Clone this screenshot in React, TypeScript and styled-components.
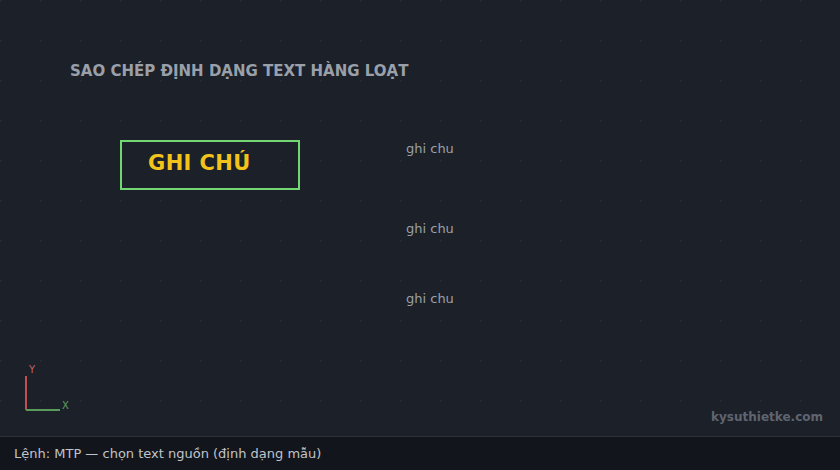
import React from 'react';
import styled, { createGlobalStyle } from 'styled-components';

const GlobalStyle = createGlobalStyle`
  html, body {
    margin: 0;
    padding: 0;
    background: #1c2029;
  }
  body {
    font-family: "DejaVu Sans", "Liberation Sans", sans-serif;
  }
`;

// y positions of the target text entities on the drawing
const notes = [149, 229, 299];

const App: React.FC = () => {
  return (
    <>
      <GlobalStyle />
      <Screen>
        <Canvas>
          <Title>SAO CHÉP ĐỊNH DẠNG TEXT HÀNG LOẠT</Title>
          <SourceBox>GHI CHÚ</SourceBox>
          {notes.map((y) => (
            <Note key={y} $top={y}>ghi chu</Note>
          ))}
          <CanvasFooter>
            <Axis>
              <svg width="40" height="46" viewBox="0 0 40 46">
                <line x1="6" y1="10" x2="6" y2="44" stroke="#c0504d" strokeWidth="2" />
                <line x1="6" y1="44" x2="40" y2="44" stroke="#5a9a5a" strokeWidth="2" />
              </svg>
              <AxisLabel $x={9} $y={-2} $color="#c06262">Y</AxisLabel>
              <AxisLabel $x={42} $y={34} $color="#5fa05f">X</AxisLabel>
            </Axis>
            <Watermark>kysuthietke.com</Watermark>
          </CanvasFooter>
        </Canvas>
        <CommandBar>Lệnh: MTP — chọn text nguồn (định dạng mẫu)</CommandBar>
      </Screen>
    </>
  );
};

export default App;

const Screen = styled.div`
  width: 840px;
  height: 470px;
  display: flex;
  flex-direction: column;
  overflow: hidden;
`;

const Canvas = styled.div`
  position: relative;
  flex: 1;
  display: flex;
  flex-direction: column;
  justify-content: space-between;
  padding: 62px 17px 10px 20px;
  box-sizing: border-box;
  background-color: #1c2029;
  background-image: radial-gradient(circle at 0.5px 0.5px, rgba(120, 130, 150, 0.16) 0.8px, transparent 1.2px);
  background-size: 40px 40px;
  background-position: 0 0;
`;

const Title = styled.div`
  padding-left: 50px;
  font-size: 15px;
  font-weight: 700;
  color: #9aa0aa;
  white-space: nowrap;
`;

const SourceBox = styled.div`
  position: absolute;
  left: 120px;
  top: 140px;
  width: 180px;
  height: 50px;
  box-sizing: border-box;
  border: 2px solid #72d672;
  padding: 0 0 4px 26px;
  display: flex;
  align-items: center;
  font-size: 21px;
  font-weight: 700;
  color: #f2c31b;
  letter-spacing: 0.4px;
`;

const Note = styled.div<{ $top: number }>`
  position: absolute;
  left: 406px;
  top: ${(p) => p.$top - 8}px;
  font-size: 13px;
  color: #9aa0a8;
`;

const CanvasFooter = styled.div`
  display: flex;
  justify-content: space-between;
  align-items: flex-end;
`;

const Axis = styled.div`
  position: relative;
  width: 60px;
  height: 46px;
  margin-bottom: 14px;
`;

const AxisLabel = styled.span<{ $x: number; $y: number; $color: string }>`
  position: absolute;
  left: ${(p) => p.$x}px;
  top: ${(p) => p.$y}px;
  font-size: 10px;
  color: ${(p) => p.$color};
`;

const Watermark = styled.div`
  margin-bottom: 2px;
  font-size: 12px;
  font-weight: 700;
  color: #5f6570;
`;

const CommandBar = styled.div`
  height: 34px;
  box-sizing: border-box;
  border-top: 1px solid #2c313a;
  background: #12151b;
  padding: 0 14px 1px;
  display: flex;
  align-items: center;
  font-size: 13px;
  color: #c0c4ca;
`;
